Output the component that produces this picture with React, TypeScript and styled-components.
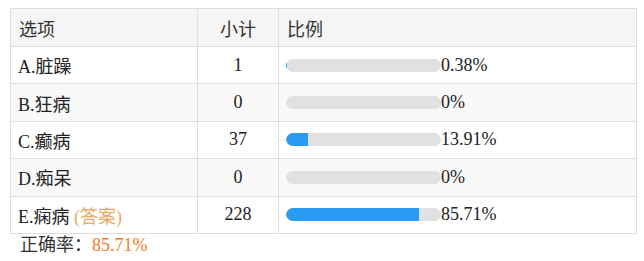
import styled, { createGlobalStyle } from 'styled-components';

const GlobalStyle = createGlobalStyle`
  body {
    margin: 0;
    padding: 8px 10px;
    background: #fff;
    font-family: "Liberation Serif", "Noto Sans CJK SC", serif;
    font-size: 18px;
    color: #222;
  }
`;

const StyledTable = styled.table`
  width: 626px;
  border-collapse: collapse;
  table-layout: fixed;
`;

const StyledHeadCell = styled.th<{ $center?: boolean; $width: number }>`
  box-sizing: border-box;
  width: ${(p) => p.$width}px;
  height: 38px;
  padding: 0 8px;
  background: #f5f5f5;
  border: 1px solid #ddd;
  font-weight: normal;
  text-align: ${(p) => (p.$center ? 'center' : 'left')};
  color: #333;
`;

const StyledRow = styled.tr<{ $striped: boolean }>`
  background: ${(p) => (p.$striped ? '#f9f9f9' : '#fff')};
`;

const StyledCell = styled.td<{ $center?: boolean }>`
  box-sizing: border-box;
  height: 37.4px;
  padding: 0 7px;
  border: 1px solid #ddd;
  text-align: ${(p) => (p.$center ? 'center' : 'left')};
  vertical-align: middle;
  white-space: nowrap;
`;

const StyledRatio = styled.div`
  display: flex;
  align-items: center;
`;

const StyledTrack = styled.div`
  width: 155px;
  height: 13px;
  border-radius: 7px;
  background: #e1e1e1;
  overflow: hidden;
`;

const StyledFill = styled.div`
  height: 100%;
  background: #2a9bf3;
  border-radius: 7px 0 0 7px;
`;

const StyledAnswer = styled.span`
  color: #e8aa62;
`;

const StyledFooter = styled.div`
  padding: 0 0 0 10px;
  line-height: 22px;
  color: #333;
`;

const StyledRate = styled.span`
  color: #f27a22;
`;

const rows = [
  { label: 'A.脏躁', count: 1, pct: 0.38, text: '0.38%' },
  { label: 'B.狂病', count: 0, pct: 0, text: '0%' },
  { label: 'C.癫病', count: 37, pct: 13.91, text: '13.91%' },
  { label: 'D.痴呆', count: 0, pct: 0, text: '0%' },
  { label: 'E.痫病', count: 228, pct: 85.71, text: '85.71%', answer: true },
];

export default function App() {
  return (
    <>
      <GlobalStyle />
      <StyledTable>
        <thead>
          <tr>
            <StyledHeadCell $width={187}>选项</StyledHeadCell>
            <StyledHeadCell $width={81} $center>
              小计
            </StyledHeadCell>
            <StyledHeadCell $width={358}>比例</StyledHeadCell>
          </tr>
        </thead>
        <tbody>
          {rows.map((r, i) => (
            <StyledRow key={r.label} $striped={i % 2 === 1}>
              <StyledCell>
                {r.label}
                {r.answer && <StyledAnswer> (答案)</StyledAnswer>}
              </StyledCell>
              <StyledCell $center>{r.count}</StyledCell>
              <StyledCell>
                <StyledRatio>
                  <StyledTrack>
                    <StyledFill style={{ width: `${r.pct}%` }} />
                  </StyledTrack>
                  {r.text}
                </StyledRatio>
              </StyledCell>
            </StyledRow>
          ))}
        </tbody>
      </StyledTable>
      <StyledFooter>
        正确率：<StyledRate>85.71%</StyledRate>
      </StyledFooter>
    </>
  );
}
